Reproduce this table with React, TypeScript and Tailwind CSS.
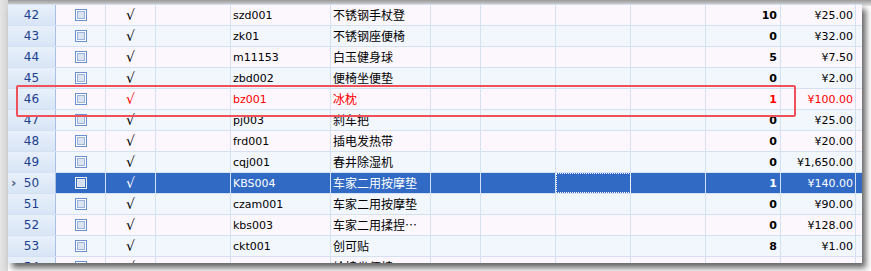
import React from "react";

type Row = {
  n: number;
  code: string;
  name: string;
  qty: string;
  price: string;
  red?: boolean;
  sel?: boolean;
};

const rows: Row[] = [
  { n: 42, code: "szd001", name: "不锈钢手杖登", qty: "10", price: "¥25.00" },
  { n: 43, code: "zk01", name: "不锈钢座便椅", qty: "0", price: "¥32.00" },
  { n: 44, code: "m11153", name: "白玉健身球", qty: "5", price: "¥7.50" },
  { n: 45, code: "zbd002", name: "便椅坐便垫", qty: "0", price: "¥2.00" },
  { n: 46, code: "bz001", name: "冰枕", qty: "1", price: "¥100.00", red: true },
  { n: 47, code: "pj003", name: "刹车把", qty: "0", price: "¥25.00" },
  { n: 48, code: "frd001", name: "插电发热带", qty: "0", price: "¥20.00" },
  { n: 49, code: "cqj001", name: "春井除湿机", qty: "0", price: "¥1,650.00" },
  { n: 50, code: "KBS004", name: "车家二用按摩垫", qty: "1", price: "¥140.00", sel: true },
  { n: 51, code: "czam001", name: "车家二用按摩垫", qty: "0", price: "¥90.00" },
  { n: 52, code: "kbs003", name: "车家二用揉捏…", qty: "0", price: "¥128.00" },
  { n: 53, code: "ckt001", name: "创可贴", qty: "8", price: "¥1.00" },
  { n: 54, code: "cfj001", name: "轮椅坐便椅", qty: "0", price: "¥60.00" },
];

const cell = "h-full border-r border-[#d4e1f2] flex items-center shrink-0";

function CheckBox({ sel }: { sel?: boolean }) {
  return (
    <div
      className={`w-[12px] h-[12px] border ${
        sel ? "border-[#eef2fa] bg-[#316ac5]" : "border-[#6a8fd2] bg-white"
      } p-[1px]`}
    >
      <div
        className={`w-full h-full border ${
          sel ? "border-[#e4eaf4] bg-[#d6dfee]" : "border-[#9cb3d8] bg-[#d9e3f2]"
        }`}
      />
    </div>
  );
}

function GridRow({ r, i }: { r: Row; i: number }) {
  const even = i % 2 === 0;
  const bg = r.sel ? "bg-[#316ac5]" : even ? "bg-[#fcf7fc]" : "bg-[#f2f6fd]";
  const color = r.sel ? "text-white" : r.red ? "text-[#ff0000]" : "text-black";
  return (
    <div className="flex h-[21px] border-b border-[#d4e1f2] shrink-0">
      <div className="w-[48px] h-full shrink-0 border-r border-[#a9c1e0] bg-gradient-to-b from-[#e8f0fb] to-[#d8e5f6] flex items-center justify-center relative text-[#1c3f8f] text-[12px]">
        {r.sel && (
          <span className="absolute left-[3px] top-[3px] text-[13px] font-bold text-[#4a5d7c]">›</span>
        )}
        <span>{r.n}</span>
      </div>
      <div className={`flex flex-1 h-full ${bg} ${color}`}>
        <div className={`${cell} w-[50px] justify-center`}>
          <CheckBox sel={r.sel} />
        </div>
        <div className={`${cell} w-[50px] justify-center text-[14px]`}>√</div>
        <div className={`${cell} w-[75px]`} />
        <div className={`${cell} w-[100px] pl-[2px]`}>{r.code}</div>
        <div className={`${cell} w-[100px] pl-[2px] cjk text-[12px]`}>{r.name}</div>
        <div className={`${cell} w-[50px]`} />
        <div className={`${cell} w-[75px]`} />
        <div
          className={`${cell} w-[75px] ${
            r.sel ? "outline outline-1 outline-dotted outline-white -outline-offset-1" : ""
          }`}
        />
        <div className={`${cell} w-[75px]`} />
        <div className={`${cell} w-[75px] justify-end pr-[3px] font-bold`}>{r.qty}</div>
        <div className={`${cell} w-[75px] justify-end pr-[2px]`}>{r.price}</div>
      </div>
    </div>
  );
}

export default function App() {
  return (
    <div className="w-[871px] h-[271px] bg-white relative overflow-hidden">
      <style>{`.cjk{font-family:"Noto Sans CJK SC","DejaVu Sans",sans-serif;}`}</style>
      <div className="absolute inset-x-0 top-0 h-[6px] bg-gradient-to-b from-[#9a9a9a] to-[#e6e6e6]" />
      <div className="absolute left-0 top-0 bottom-0 w-[8px] bg-gradient-to-r from-[#e4e4e4] to-[#d6d6d6]" />
      <div
        className="absolute left-[8px] top-[4px] w-[854px] h-[259px] overflow-hidden bg-[#f6f6fb] shadow-[4px_5px_6px_rgba(0,0,0,0.6)] flex flex-col text-[11px] leading-none"
        style={{ fontFamily: '"DejaVu Sans", "Noto Sans CJK SC", sans-serif' }}
      >
        <div className="h-[1px] shrink-0 bg-[#d4e1f2]" />
        {rows.map((r, i) => (
          <GridRow key={r.n} r={r} i={i} />
        ))}
      </div>
      <div className="absolute left-[16px] top-[85px] w-[780px] h-[32px] border-2 border-[#f0505a] rounded-[2px]" />
    </div>
  );
}
